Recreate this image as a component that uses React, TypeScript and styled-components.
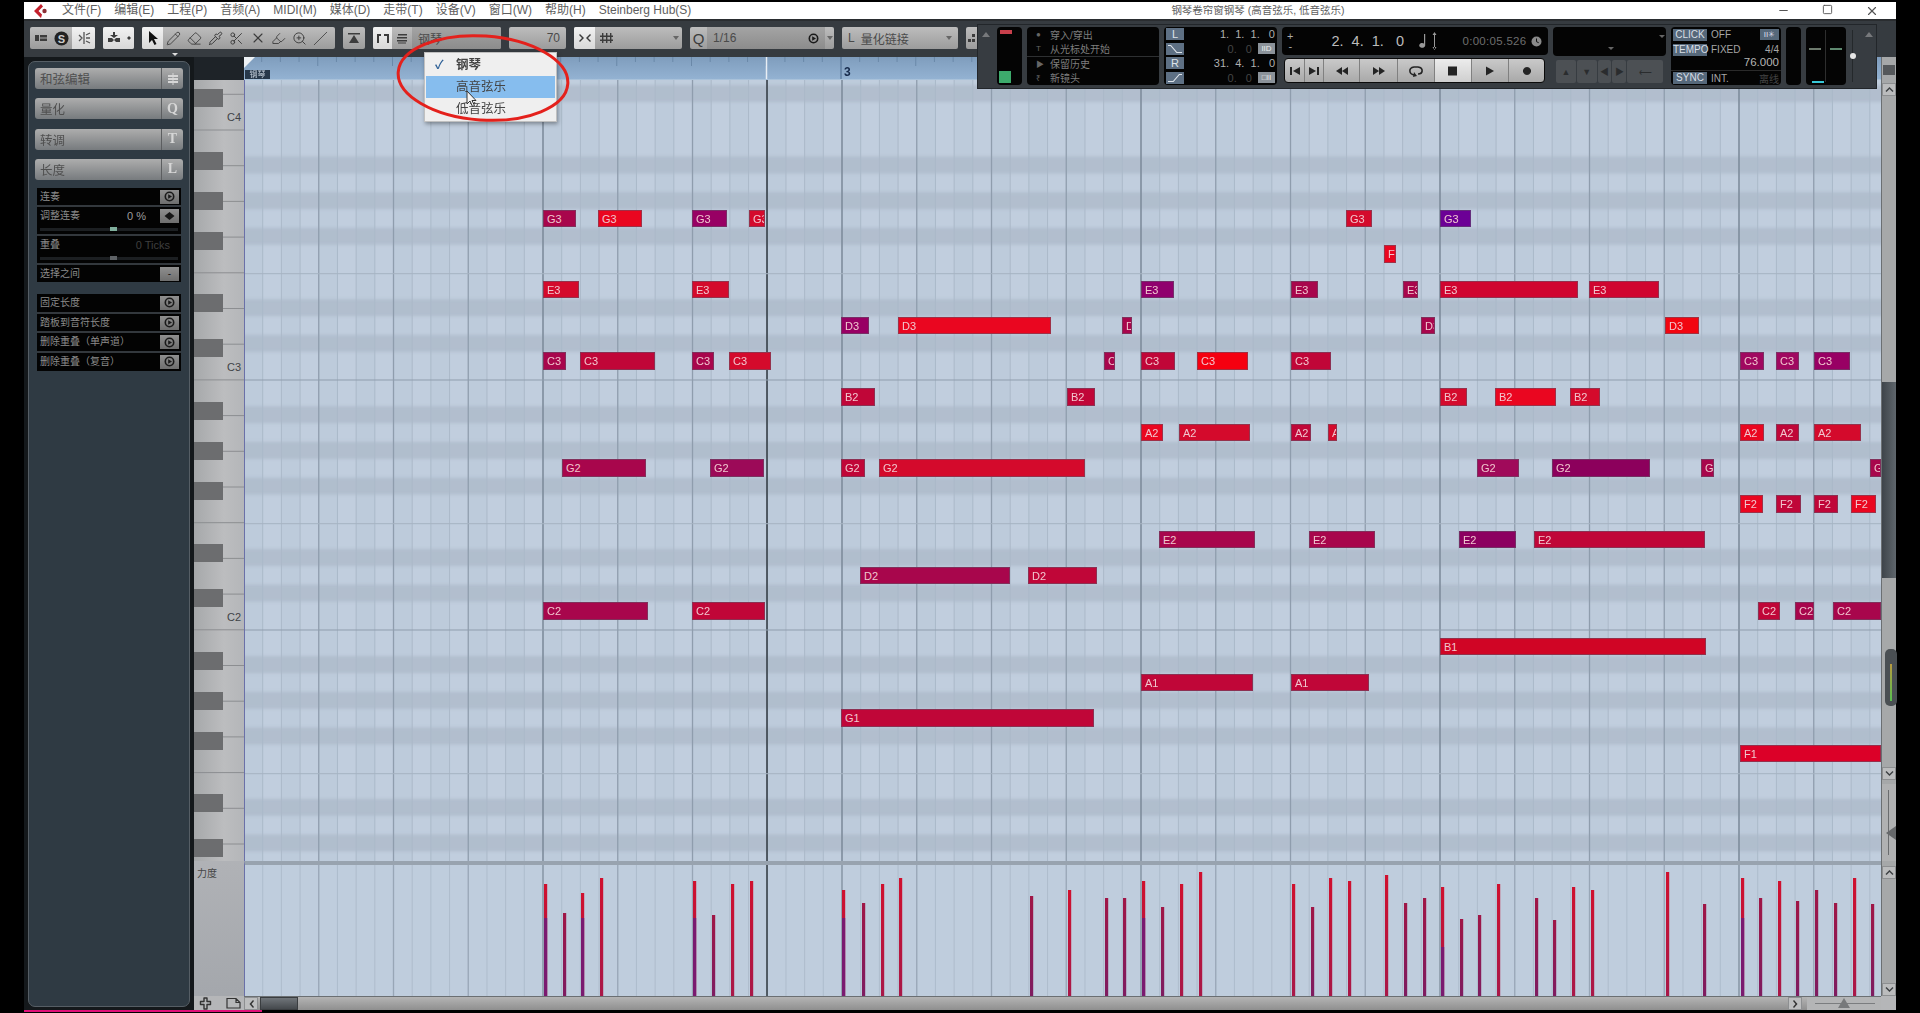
import styled, { createGlobalStyle } from "styled-components";
import { Eraser, Minus, Pencil, Pipette, Scissors, Slash, Square, X, ZoomIn, Highlighter } from "lucide-react";

const FONT = `"Liberation Sans", "Noto Sans CJK SC", sans-serif`;

const GlobalStyle = createGlobalStyle`
  html, body {
    margin: 0;
    padding: 0;
    background: #000;
    overflow: hidden;
  }
  * {
    box-sizing: border-box;
  }
`;

const Screen = styled.div`
  width: 1920px;
  height: 1013px;
  padding: 2px 24px 0;
  background: #000;
  font-family: ${FONT};
  overflow: hidden;
`;
const Blur = styled.div`
  position: relative;
  width: 1872px;
  filter: blur(0.6px);
`;

/* title bar */
const TitleBar = styled.div`
  display: flex;
  align-items: center;
  height: 17px;
  padding-left: 9px;
  background: #fff;
  color: #5e5e5e;
  font-size: 12px;
  line-height: 17px;
`;
const Menus = styled.div`
  display: flex;
  gap: 13px;
  margin-left: 13px;
`;
const WinTitle = styled.div`
  margin-left: 480px;
  font-size: 10.5px;
  width: 380px;
  white-space: nowrap;
`;
const WinButtons = styled.div`
  display: flex;
  gap: 32px;
  margin-left: auto;
  padding-right: 17px;
  color: #555;
`;

/* toolbar */
const Toolbar = styled.div`
  display: flex;
  gap: 8px;
  height: 38px;
  padding: 6px 0 0 6px;
  background: #363b40;
  border-top: 2px solid #2a2d30;
`;
const ToolGroup = styled.div<{ $w: number }>`
  display: flex;
  align-items: center;
  width: ${(p) => p.$w}px;
  height: 22px;
  flex: none;
  background: linear-gradient(#bdbdbd, #9c9c9c);
  border-radius: 2px;
  color: #4a4a4a;
  overflow: hidden;
  font-size: 12px;
`;
const ToolCell = styled.div<{ $w?: number; $on?: boolean; $big?: boolean }>`
  display: flex;
  align-items: center;
  justify-content: center;
  width: ${(p) => p.$w ?? 21}px;
  height: 100%;
  flex: none;
  background: ${(p) => (p.$on ? "linear-gradient(#f2f2f2, #d8d8d8)" : "transparent")};
  color: #3c3c3c;
  font-size: ${(p) => (p.$big ? 15 : 12)}px;
`;
const ToolField = styled.div<{ $dim?: boolean }>`
  display: flex;
  align-items: center;
  flex: 1;
  height: 100%;
  gap: 6px;
  padding: 0 6px;
  background: ${(p) => (p.$dim ? "linear-gradient(#a4a4a4, #8c8c8c)" : "transparent")};
  color: #4a4a4a;
  font-size: 12px;
  white-space: nowrap;
`;
const ToolSpacer = styled.span`
  flex: 1;
`;
const Caret = styled.span`
  width: 0;
  height: 0;
  border: 3px solid transparent;
  border-top: 4px solid #666;
  border-bottom: none;
`;
const ArrowMark = styled.div`
  position: absolute;
  left: 148px;
  top: 51px;
  width: 0;
  height: 0;
  border: 3px solid transparent;
  border-top: 3px solid #ddd;
`;

/* transport panel */
const Transport = styled.div`
  position: absolute;
  left: 953px;
  top: 22px;
  width: 900px;
  height: 65px;
  display: flex;
  gap: 5px;
  padding: 2px 0 3px 2px;
  background: #373c41;
  border: 1px solid #22262a;
  color: #9a9a9a;
  font-size: 10px;
`;
const PanelArrow = styled.div`
  width: 12px;
  flex: none;
  padding: 5px 0 0 2px;
  &::before {
    content: "";
    display: block;
    width: 0;
    height: 0;
    border: 4px solid transparent;
    border-bottom: 5px solid #77797c;
    border-top: none;
  }
`;
const BlackBox = styled.div<{ $w: number }>`
  position: relative;
  width: ${(p) => p.$w}px;
  flex: none;
  background: #040404;
  border-radius: 4px;
  overflow: hidden;
`;
const MeterRed = styled.div`
  margin: 3px 0 0 3px;
  width: 12px;
  height: 4px;
  background: #c8404c;
`;
const MeterGreen = styled.div`
  margin: 37px 0 0 2px;
  width: 12px;
  height: 12px;
  background: #3dab6c;
`;
const PunchRow = styled.div<{ $line?: boolean }>`
  display: flex;
  align-items: center;
  height: 14.5px;
  padding-left: 9px;
  gap: 9px;
  color: #7e7e7e;
  border-top: ${(p) => (p.$line ? "1px solid #2e3032" : "none")};
  white-space: nowrap;
`;
const PunchDot = styled.span`
  width: 5px;
  color: #666;
  font-size: 8px;
`;
const LocRow = styled.div`
  display: flex;
  align-items: center;
  justify-content: space-between;
  height: 14.5px;
  padding: 0 2px;
  color: #b0b0b0;
  font-size: 11px;
  white-space: pre;
`;
const LocBtn = styled.div`
  display: flex;
  align-items: center;
  justify-content: center;
  width: 18px;
  height: 12px;
  background: #5e7084;
  color: #dfe4ea;
  font-size: 11px;
`;
const LocDim = styled.div`
  display: flex;
  align-items: center;
  gap: 6px;
  color: #444;
`;
const LocTag = styled.div`
  display: flex;
  align-items: center;
  justify-content: center;
  width: 17px;
  height: 11px;
  background: #8b9299;
  color: #eee;
  font-size: 8px;
`;
const MainCol = styled.div`
  display: flex;
  flex-direction: column;
  gap: 3px;
  width: 266px;
  flex: none;
`;
const TimeRow = styled.div`
  display: flex;
  align-items: center;
  height: 28px;
  padding: 0 5px;
  background: #040404;
  border-radius: 4px;
  color: #bcbcbc;
  white-space: pre;
`;
const PlusCol = styled.div`
  display: flex;
  flex-direction: column;
  align-items: center;
  color: #aaa;
  font-size: 11px;
  line-height: 10px;
`;
const Position = styled.div`
  margin-left: 38px;
  width: 86px;
  font-size: 14.5px;
`;
const Clock = styled.div`
  display: flex;
  align-items: center;
  gap: 4px;
  margin-left: 23px;
  color: #6e6e6e;
  font-size: 11.5px;
  letter-spacing: 0.3px;
`;
const TransportBar = styled.div`
  display: flex;
  margin-left: 2px;
  width: 261px;
  height: 25px;
  border-radius: 4px;
  border: 1px solid #0b0b0b;
  overflow: hidden;
  background: linear-gradient(#c9c9c9, #a9a9a9);
`;
const TransportBtn = styled.div<{ $w: number; $on?: boolean }>`
  display: flex;
  align-items: center;
  justify-content: center;
  width: ${(p) => p.$w}px;
  flex: none;
  border-right: 1px solid #808080;
  background: ${(p) => (p.$on ? "linear-gradient(#ececec, #cfcfcf)" : "transparent")};
  color: #242424;
`;
const MarkerCol = styled.div`
  display: flex;
  flex-direction: column;
  gap: 4px;
  width: 113px;
  flex: none;
`;
const MarkerTop = styled.div`
  position: relative;
  height: 29px;
  background: #040404;
  border-radius: 4px;
`;
const TinyCaret = styled.span<{ $x: number; $y: number }>`
  position: absolute;
  left: ${(p) => p.$x}px;
  top: ${(p) => p.$y}px;
  border: 3px solid transparent;
  border-top: 3px solid #666;
`;
const MarkerBtns = styled.div`
  display: flex;
  gap: 1px;
  margin: 0 3px;
  height: 23px;
`;
const MarkerBtn = styled.div<{ $w: number }>`
  display: flex;
  align-items: center;
  justify-content: center;
  width: ${(p) => p.$w}px;
  background: #4c5054;
  border-radius: 2px;
  color: #2a2c2e;
  font-size: 9px;
`;
const ClickRow = styled.div<{ $line?: boolean }>`
  display: flex;
  align-items: center;
  height: 15px;
  gap: 4px;
  padding: 0 2px;
  color: #a6a6a6;
  border-top: ${(p) => (p.$line ? "1px solid #2a2a2a" : "none")};
  white-space: nowrap;
`;
const ClickTag = styled.div`
  width: 34px;
  height: 12px;
  line-height: 12px;
  text-align: center;
  background: #56687a;
  color: #d8dfe6;
  font-size: 10px;
`;
const ClickRight = styled.div<{ $size?: number; $dim?: boolean }>`
  margin-left: auto;
  font-size: ${(p) => p.$size ?? 10}px;
  color: ${(p) => (p.$dim ? "#444" : "#a6a6a6")};
`;
const ClickIcon = styled.div`
  margin-left: auto;
  width: 19px;
  height: 11px;
  line-height: 11px;
  text-align: center;
  background: #56687a;
  color: #dde;
  font-size: 8px;
`;
const ClickValue = styled.div`
  height: 10px;
  padding-right: 2px;
  line-height: 10px;
  text-align: right;
  color: #b4b4b4;
  font-size: 11.5px;
`;
const OutLevel = styled.div<{ $x: number; $y: number; $w: number; $color: string }>`
  position: absolute;
  left: ${(p) => p.$x}px;
  top: ${(p) => p.$y}px;
  width: ${(p) => p.$w}px;
  height: 2px;
  background: ${(p) => p.$color};
`;
const OutMid = styled.div`
  position: absolute;
  left: 19px;
  top: 3px;
  bottom: 3px;
  width: 1px;
  background: #2e2e2e;
`;
const Fader = styled.div`
  position: relative;
  width: 10px;
  flex: none;
  margin-left: -3px;
  &::before {
    content: "";
    position: absolute;
    left: 4px;
    top: 3px;
    bottom: 3px;
    width: 1px;
    background: #24282b;
  }
  &::after {
    content: "";
    position: absolute;
    left: 2px;
    top: 26px;
    width: 6px;
    height: 6px;
    border-radius: 50%;
    background: #e6e6e6;
  }
`;

/* body */
const Body = styled.div`
  display: flex;
  height: 953px;
`;
const Inspector = styled.div`
  width: 170px;
  flex: none;
  padding: 4px 4px 3px;
  background: #14181b;
`;
const InspectorPanel = styled.div`
  height: 100%;
  padding: 6px 6px;
  background: #2f3a43;
  border: 1px solid #565e65;
  border-radius: 7px;
`;
const SectionList = styled.div`
  display: flex;
  flex-direction: column;
  gap: 9.3px;
`;
const Section = styled.div`
  display: flex;
  align-items: center;
  height: 21px;
  border-radius: 3px;
  background: linear-gradient(#adadad, #777b7e);
  color: #4f4f4f;
  font-size: 12.5px;
`;
const SectionName = styled.div`
  flex: 1;
  padding-left: 5px;
`;
const SectionKey = styled.div`
  display: flex;
  align-items: center;
  justify-content: center;
  width: 22px;
  height: 100%;
  border-left: 1px solid #5c5e60;
  color: #d6d6d6;
  font: bold 14px "Liberation Serif", serif;
`;
const ToolBox = styled.div<{ $top: number }>`
  display: flex;
  flex-direction: column;
  gap: 2px;
  margin: ${(p) => p.$top}px 2px 0;
  background: #33383d;
`;
const ToolRow = styled.div<{ $h: number }>`
  position: relative;
  display: flex;
  align-items: flex-start;
  height: ${(p) => p.$h}px;
  padding: 2px 2px 0 3px;
  background: #030303;
  color: #8b8b8b;
  font-size: 10px;
  line-height: 14px;
`;
const RowValue = styled.div<{ $dim?: boolean }>`
  margin-left: auto;
  margin-right: ${(p) => (p.$dim ? 9 : 14)}px;
  color: ${(p) => (p.$dim ? "#3f3f3f" : "#9e9e9e")};
  font-size: 11px;
`;
const ExecBtn = styled.div`
  display: flex;
  align-items: center;
  justify-content: center;
  margin-left: auto;
  width: 19px;
  height: 14px;
  flex: none;
  background: linear-gradient(#8f8f8f, #6e6e6e);
  color: #161616;
  ${RowValue} + & {
    margin-left: 0;
  }
`;
const RowSlider = styled.div`
  position: absolute;
  left: 3px;
  right: 3px;
  bottom: 3px;
  height: 3px;
  background: #1c1f22;
`;
const SliderKnob = styled.div<{ $green?: boolean }>`
  position: absolute;
  left: 70px;
  top: -1px;
  width: 7px;
  height: 4px;
  background: ${(p) => (p.$green ? "#7fae9c" : "#5e6266")};
`;

/* editor grid */
const Editor = styled.div`
  display: grid;
  flex: 1;
  grid-template-columns: 50px 1637px 15px;
  grid-template-rows: 23px 781px 135px 14px;
`;
const Corner = styled.div`
  background: #1e2328;
`;
const Ruler = styled.div`
  position: relative;
  background: linear-gradient(#7f9dbd, #93b2d2);
  border-bottom: 1px solid #a9c2da;
`;
const RulerSvg = styled.svg`
  display: block;
`;
const BarNumber = styled.div`
  position: absolute;
  left: 600px;
  top: 8px;
  color: #15294a;
  font-size: 12px;
  font-weight: bold;
`;
const TrackTag = styled.div`
  position: absolute;
  left: 1px;
  bottom: 0;
  width: 25px;
  height: 9px;
  background: #27384a;
  color: #c9d3de;
  font-size: 8px;
  line-height: 9px;
  text-align: center;
`;
const CornerFlag = styled.div`
  position: absolute;
  left: 0;
  top: 0;
  width: 0;
  height: 0;
  border-top: 11px solid #eef2f6;
  border-right: 11px solid transparent;
`;
const RollPane = styled.div`
  position: relative;
  overflow: hidden;
  border-left: 1px solid #6a70a8;
`;
const GridSvg = styled.svg`
  position: absolute;
  left: -1px;
  top: 0;
`;
const SoftBands = styled.g`
  filter: blur(1.5px);
`;
const Note = styled.div<{ $color: string }>`
  position: absolute;
  height: 17.5px;
  padding-left: 3px;
  overflow: hidden;
  background: ${(p) => p.$color};
  border: 1px solid rgba(96, 84, 104, 0.55);
  color: #f1c6ce;
  font-size: 11px;
  line-height: 16px;
  white-space: nowrap;
`;
const KeysSvg = styled.svg`
  display: block;
`;
const VelLabelCell = styled.div`
  padding: 4px 3px;
  background: linear-gradient(#b0b2b6, #a4a7ac);
  color: #454545;
  font-size: 10px;
`;
const VelPane = styled.div`
  position: relative;
  border-top: 4px solid #98a3af;
  border-left: 1px solid #6a70a8;
  overflow: hidden;
`;
const VScroll = styled.div`
  position: relative;
  display: flex;
  flex-direction: column;
  background: #a6a8a9;
  border-left: 1px solid #6b6f72;
`;
const DropBtn = styled.div`
  height: 10px;
  margin: 8px 1px 0;
  flex: none;
  background: #55585b;
`;
const ScrollBtn = styled.div<{ $gap?: number }>`
  display: flex;
  align-items: center;
  justify-content: center;
  height: 13px;
  margin-top: ${(p) => p.$gap ?? 0}px;
  flex: none;
  background: #bbbcbd;
  border: 1px solid #8d8f91;
  color: #3c3f42;
`;
const ScrollTrack = styled.div`
  flex: 1;
  padding-top: 286px;
`;
const ScrollThumb = styled.div`
  height: 196px;
  background: linear-gradient(90deg, #3e444a, #5f666c);
`;
const MiniKnob = styled.div`
  position: absolute;
  left: 3px;
  top: 569px;
  width: 12px;
  height: 57px;
  border-radius: 5px;
  background: #4a4f53;
  &::after {
    content: "";
    position: absolute;
    left: 5px;
    top: 15px;
    bottom: 5px;
    width: 2px;
    background: linear-gradient(#b89a40, #58c050);
  }
`;
const ZoomRail = styled.div`
  position: relative;
  height: 77px;
  flex: none;
  margin-top: 4px;
  background: #b0b1b2;
  &::before {
    content: "";
    position: absolute;
    left: 6px;
    top: 6px;
    bottom: 6px;
    width: 1px;
    background: #6a6c6e;
  }
`;
const ZoomHandle = styled.div`
  position: absolute;
  right: 0;
  top: 42px;
  width: 0;
  height: 0;
  border: 7px solid transparent;
  border-right: 10px solid #66686a;
  border-left: none;
`;
const VelTrack = styled.div`
  flex: 1;
`;
const BottomIcons = styled.div`
  display: flex;
  align-items: center;
  justify-content: space-between;
  padding: 0 3px 0 5px;
  background: #b5b6b8;
  color: #333;
`;
const HScroll = styled.div`
  display: flex;
  align-items: stretch;
  background: linear-gradient(#b4b4b4, #8f8f8f);
  border-top: 1px solid #6b6f72;
`;
const HBtn = styled.div`
  display: flex;
  align-items: center;
  justify-content: center;
  width: 14px;
  flex: none;
  background: #bdbebf;
  border: 1px solid #8d8f91;
  color: #333;
`;
const HThumb = styled.div`
  width: 38px;
  flex: none;
  margin-left: 2px;
  background: linear-gradient(#70757a, #45494d);
  border: 1px solid #3a3d40;
`;
const HFill = styled.div`
  flex: 1;
`;
const HZoom = styled.div`
  position: relative;
  width: 74px;
  flex: none;
  margin-left: 5px;
  background: #b4b5b6;
  &::before {
    content: "";
    position: absolute;
    left: 8px;
    right: 6px;
    top: 6px;
    height: 1px;
    background: #7b7d7f;
  }
  &::after {
    content: "";
    position: absolute;
    left: 31px;
    top: 1px;
    border: 6px solid transparent;
    border-bottom: 10px solid #77797b;
    border-top: none;
  }
`;
const PinkLine = styled.div`
  width: 238px;
  height: 2px;
  background: #e01078;
`;

/* dropdown over the toolbar */
const Menu = styled.div`
  position: absolute;
  left: 400px;
  top: 50px;
  width: 133px;
  padding: 1px;
  background: #efefef;
  border: 1px solid #c0c0c0;
  box-shadow: 1px 2px 4px rgba(0, 0, 0, 0.35);
  color: #444;
  font-size: 12.5px;
`;
const MenuItem = styled.div<{ $active?: boolean; $bold?: boolean }>`
  position: relative;
  height: 22px;
  padding-left: 30px;
  line-height: 22px;
  background: ${(p) => (p.$active ? "#86bdee" : "transparent")};
  font-weight: ${(p) => (p.$bold ? "bold" : "normal")};
`;
const MenuCheck = styled.span`
  position: absolute;
  left: 9px;
  top: 0;
  color: #2c5f96;
  font-size: 12px;
`;
const Annotation = styled.svg`
  position: absolute;
  left: 346px;
  top: 30px;
  pointer-events: none;
`;
const Pointer = styled.svg`
  position: absolute;
  left: 442px;
  top: 88px;
  pointer-events: none;
`;

const ROW_TOP = 209.6;
const ROW_STEP = 35.69;
const PITCHES = ["G3", "F3", "E3", "D3", "C3", "B2", "A2", "G2", "F2", "E2", "D2", "C2", "B1", "A1", "G1", "F1"];

const P = "#980064";
const V = "#a8064c";
const W = "#c00638";
const R = "#d40a2c";
const B = "#ea0620";

// pitch, left, right in screen pixels, colour
const NOTES: [string, number, number, string][] = [
  ["G3", 543, 576, V], ["G3", 598, 642, B], ["G3", 692, 727, P], ["G3", 749, 765, R],
  ["G3", 1346, 1372, R], ["G3", 1440, 1471, "#6c0096"],
  ["F3", 1384, 1396, B],
  ["E3", 543, 579, R], ["E3", 692, 729, R], ["E3", 1141, 1174, "#90006e"], ["E3", 1291, 1318, V],
  ["E3", 1403, 1418, V], ["E3", 1440, 1578, "#d00530"], ["E3", 1589, 1659, "#d00530"],
  ["D3", 841, 869, P], ["D3", 898, 1051, B], ["D3", 1122, 1132, V], ["D3", 1421, 1435, V], ["D3", 1665, 1699, "#f20510"],
  ["C3", 543, 566, V], ["C3", 580, 655, W], ["C3", 692, 714, V], ["C3", 729, 771, R],
  ["C3", 1104, 1115, V], ["C3", 1141, 1175, W], ["C3", 1197, 1248, "#f50010"], ["C3", 1291, 1331, W],
  ["C3", 1740, 1764, "#a00860"], ["C3", 1776, 1799, "#a00860"], ["C3", 1814, 1850, P],
  ["B2", 841, 875, W], ["B2", 1067, 1095, W], ["B2", 1440, 1467, R], ["B2", 1495, 1556, B], ["B2", 1570, 1600, R],
  ["A2", 1141, 1163, B], ["A2", 1179, 1250, R], ["A2", 1291, 1311, W], ["A2", 1328, 1337, R],
  ["A2", 1740, 1764, B], ["A2", 1776, 1799, W], ["A2", 1814, 1861, R],
  ["G2", 562, 646, V], ["G2", 710, 764, "#9c0a58"], ["G2", 841, 865, W], ["G2", 879, 1085, R],
  ["G2", 1477, 1519, "#a00a5a"], ["G2", 1552, 1650, "#8c005c"], ["G2", 1701, 1714, V], ["G2", 1870, 1881, V],
  ["F2", 1740, 1763, B], ["F2", 1776, 1801, W], ["F2", 1814, 1838, W], ["F2", 1851, 1876, B],
  ["E2", 1159, 1255, V], ["E2", 1309, 1375, V], ["E2", 1459, 1516, "#8c0060"], ["E2", 1534, 1705, W],
  ["D2", 860, 1010, V], ["D2", 1028, 1097, W],
  ["C2", 543, 648, V], ["C2", 692, 765, W], ["C2", 1758, 1780, W], ["C2", 1795, 1814, V], ["C2", 1833, 1881, V],
  ["B1", 1440, 1706, "#d00525"],
  ["A1", 1141, 1253, W], ["A1", 1291, 1369, W],
  ["G1", 841, 1094, W],
  ["F1", 1740, 1881, "#dc0028"],
];

// velocity stems: x in screen pixels, top in screen pixels, kind
const STEMS: [number, number, string][] = [
  [544, 884, "s"], [563, 913, "w"], [581, 893, "s"], [600, 878, "r"], [693, 881, "s"], [712, 915, "w"],
  [731, 884, "r"], [750, 881, "r"], [842, 890, "s"], [862, 903, "w"], [881, 884, "r"], [899, 878, "r"],
  [1030, 896, "w"], [1068, 890, "r"], [1105, 898, "w"], [1123, 898, "w"], [1142, 881, "s"], [1161, 907, "w"],
  [1180, 884, "r"], [1199, 872, "r"], [1292, 884, "r"], [1311, 907, "w"], [1329, 878, "r"], [1348, 881, "r"],
  [1385, 875, "r"], [1404, 903, "w"], [1423, 898, "w"], [1441, 887, "s2"], [1460, 919, "w"], [1478, 915, "w"],
  [1497, 884, "r"], [1535, 898, "w"], [1553, 920, "w"], [1572, 887, "r"], [1591, 890, "r"], [1666, 872, "r"],
  [1703, 904, "w"], [1741, 878, "s"], [1759, 898, "w"], [1778, 881, "r"], [1796, 901, "w"], [1815, 890, "w"],
  [1834, 903, "w"], [1853, 878, "r"], [1871, 904, "w"],
];

const BLACK_KEYS = [89, 152, 192, 232, 294];
const BAND_ROWS = [-3, -1, 0, 1, 3, 4, 6, 7, 8, 10, 11, 13, 14, 15, 17, 18];
const SIXTEENTH = 299 / 16;
const COLUMNS = Array.from({ length: 88 }, (_, i) => i);

function lineStyle(i: number) {
  if (i % 16 === 0) return { stroke: "#7e8c9c", width: 1.6 };
  if (i % 4 === 0) return { stroke: "#8f9dad", width: 1.3 };
  return { stroke: "#abb9c9", width: 1 };
}

function GridLines({ height, fade = 1 }: { height: number; fade?: number }) {
  return (
    <>
      <g opacity={fade}>
        {COLUMNS.map((i) => {
          const l = lineStyle(i);
          const x = i * SIXTEENTH;
          return <line key={i} x1={x} x2={x} y1={0} y2={height} stroke={l.stroke} strokeWidth={l.width} />;
        })}
      </g>
      <line x1={523} x2={523} y1={0} y2={height} stroke="#3b444c" strokeWidth={1.6} />
    </>
  );
}

function RollGrid() {
  const hLines = [273.7, 380, 523.7, 630, 773.7];
  return (
    <GridSvg width={1638} height={781}>
      <rect width={1638} height={781} fill="#bdcbdb" />
      {COLUMNS.filter((i) => i % 2 === 1).map((i) => (
        <rect key={i} x={i * SIXTEENTH} y={0} width={SIXTEENTH} height={781} fill="#c4d1e0" opacity={0.55} />
      ))}
      <SoftBands>
        {BAND_ROWS.map((r) => (
          <rect key={r} x={-4} y={ROW_TOP + r * ROW_STEP - 17.5 - 80} width={1646} height={17} fill="#abb8c7" opacity={0.7} />
        ))}
      </SoftBands>
      <GridLines height={781} />
      {hLines.map((y) => (
        <line key={y} x1={0} x2={1638} y1={y - 80} y2={y - 80} stroke={y === 380 || y === 630 ? "#8f9dad" : "#a6b3c2"} />
      ))}
    </GridSvg>
  );
}

function VelocityGrid() {
  return (
    <GridSvg width={1638} height={131}>
      <defs>
        <linearGradient id="stemRed" x1="0" x2="0" y1="0" y2="1">
          <stop offset="0" stopColor="#d0102e" />
          <stop offset="1" stopColor="#a81848" />
        </linearGradient>
        <linearGradient id="stemWine" x1="0" x2="0" y1="0" y2="1">
          <stop offset="0" stopColor="#a01646" />
          <stop offset="1" stopColor="#7e1c60" />
        </linearGradient>
      </defs>
      <rect width={1638} height={131} fill="#bfcddd" />
      <GridLines height={131} fade={0.8} />
      {STEMS.map(([x, top, kind]) => {
        const y = top - 865;
        const h = 131 - y;
        const split = kind === "s" ? 53 : kind === "s2" ? 82 : 0;
        return (
          <g key={x}>
            <rect x={x - 244} y={y} width={3.2} height={h} fill={kind === "w" ? "url(#stemWine)" : "url(#stemRed)"} />
            {split > 0 && <rect x={x - 244} y={split} width={3.2} height={131 - split} fill="#7a1a70" />}
          </g>
        );
      })}
    </GridSvg>
  );
}

function PianoKeys() {
  const lines = Array.from({ length: 22 }, (_, i) => 94.3 + i * 35.7 - 80);
  const keys = [0, 250, 500, 750].flatMap((o) => BLACK_KEYS.map((y) => y + o - 80)).filter((y) => y < 770);
  return (
    <KeysSvg width={50} height={781}>
      <defs>
        <linearGradient id="keyFill" x1="0" x2="1" y1="0" y2="0">
          <stop offset="0" stopColor="#a6a8aa" />
          <stop offset="0.6" stopColor="#bcbdbf" />
          <stop offset="1" stopColor="#b4b6b9" />
        </linearGradient>
      </defs>
      <rect width={50} height={781} fill="url(#keyFill)" />
      {lines.map((y) => (
        <line key={y} x1={0} x2={50} y1={y} y2={y} stroke="#8c8e91" />
      ))}
      {keys.map((y) => (
        <rect key={y} x={0} y={y} width={29} height={18} fill="#6c6d6f" />
      ))}
      {[
        ["C4", 41],
        ["C3", 291],
        ["C2", 541],
      ].map(([t, y]) => (
        <text key={t} x={47} y={y} textAnchor="end" fontFamily="Liberation Sans" fontSize={11} fill="#3f4347">
          {t}
        </text>
      ))}
    </KeysSvg>
  );
}

function RulerTicks() {
  return (
    <RulerSvg width={1637} height={22}>
      {COLUMNS.map((i) => {
        const x = i * SIXTEENTH - 1;
        const h = i % 16 === 0 ? 22 : i % 4 === 0 ? 9 : 5;
        return <line key={i} x1={x} x2={x} y1={0} y2={h} stroke={i % 16 === 0 ? "#4a6a8e" : "#6a88a8"} />;
      })}
      <line x1={522.5} x2={522.5} y1={0} y2={22} stroke="#e8eef4" strokeWidth={1.5} />
    </RulerSvg>
  );
}

function CubaseLogo() {
  return (
    <svg width={16} height={14} viewBox="0 0 16 14">
      <path d="M8 0 L1 7 L8 14 L9 10.5 L5.5 7 L10 2.5 Z" fill="#c3202c" />
      <circle cx={11.5} cy={7} r={2.2} fill="#8c3036" />
    </svg>
  );
}

function Shape({ d, w = 14 }: { d: string; w?: number }) {
  return (
    <svg width={w} height={12} viewBox={`0 0 ${w} 12`} fill="currentColor">
      <path d={d} />
    </svg>
  );
}

function PlayCircle() {
  return (
    <svg width={11} height={11} viewBox="0 0 11 11">
      <circle cx={5.5} cy={5.5} r={4.2} fill="none" stroke="#1a1a1a" strokeWidth={1.6} />
      <path d="M4.2 3.2 L8 5.5 L4.2 7.8 Z" fill="#1a1a1a" />
    </svg>
  );
}

const MENU_ITEMS = ["文件(F)", "编辑(E)", "工程(P)", "音频(A)", "MIDI(M)", "媒体(D)", "走带(T)", "设备(V)", "窗口(W)", "帮助(H)", "Steinberg Hub(S)"];

function App() {
  return (
    <Screen>
      <GlobalStyle />
      <Blur>
        <TitleBar>
          <CubaseLogo />
          <Menus>
            {MENU_ITEMS.map((m) => (
              <span key={m}>{m}</span>
            ))}
          </Menus>
          <WinTitle>钢琴卷帘窗钢琴 (高音弦乐, 低音弦乐)</WinTitle>
          <WinButtons>
            <Minus size={13} />
            <Square size={11} />
            <X size={14} />
          </WinButtons>
        </TitleBar>

        <Toolbar>
          <ToolGroup $w={65}>
            <ToolCell>
              <Shape d="M1 3h4v6H1z M6 3h7v2.5H6z M6 6.5h7V9H6z" />
            </ToolCell>
            <ToolCell>
              <svg width={15} height={15} viewBox="0 0 15 15">
                <circle cx={7.5} cy={7.5} r={7} fill="#222" />
                <text x={7.5} y={11.5} textAnchor="middle" fontFamily="Liberation Sans" fontWeight="bold" fontSize={11} fill="#ccc">
                  S
                </text>
              </svg>
            </ToolCell>
            <ToolCell $w={23} $on>
              <svg width={14} height={14} viewBox="0 0 14 14" fill="none" stroke="#555" strokeWidth={1.3}>
                <path d="M7 1v12M2 4l3 3-3 3M9 4l4-2M9 7h4M9 10l4 2" />
              </svg>
            </ToolCell>
          </ToolGroup>
          <ToolGroup $w={31}>
            <ToolCell $w={21} $on>
              <Shape d="M6 0h2v3h3L7 6 3 3h3zM1 6l4 0 2 2-2 2-4 0zM13 6l-4 0-2 2 2 2 4 0z" />
            </ToolCell>
            <ToolCell $w={10} $on>
              <Shape w={6} d="M3 4l2 2-2 2-2-2z" />
            </ToolCell>
          </ToolGroup>
          <ToolGroup $w={193}>
            <ToolCell $w={21} $on>
              <svg width={12} height={16} viewBox="0 0 12 16">
                <path d="M2 1 L2 13 L5 10 L7.5 15 L9.5 14 L7 9 L11 9 Z" fill="#111" />
              </svg>
            </ToolCell>
            <ToolCell><Pencil size={15} strokeWidth={1.4} /></ToolCell>
            <ToolCell><Eraser size={15} strokeWidth={1.4} /></ToolCell>
            <ToolCell><Pipette size={15} strokeWidth={1.6} /></ToolCell>
            <ToolCell><Scissors size={15} strokeWidth={1.5} /></ToolCell>
            <ToolCell><X size={16} strokeWidth={1.7} /></ToolCell>
            <ToolCell><Highlighter size={15} strokeWidth={1.4} /></ToolCell>
            <ToolCell><ZoomIn size={15} strokeWidth={1.5} /></ToolCell>
            <ToolCell><Slash size={15} strokeWidth={1.3} /></ToolCell>
          </ToolGroup>
          <ToolGroup $w={22}>
            <ToolCell $w={22}>
              <Shape d="M1 1h12v1.4H1zM7 3l5 8H2z" />
            </ToolCell>
          </ToolGroup>
          <ToolGroup $w={128}>
            <ToolCell $w={19} $on>
              <Shape d="M1 2h4v2H3v7H1zM8 2h5v9h-2V4H8z" />
            </ToolCell>
            <ToolCell $w={20}>
              <Shape d="M3 2h9v1.6H3zM2 5h10v1.6H2zM2 8h10v1.6H2zM3 10.4h8v1H3z" />
            </ToolCell>
            <ToolField $dim>钢琴</ToolField>
          </ToolGroup>
          <ToolGroup $w={57}>
            <ToolField>
              <ToolSpacer />
              70
            </ToolField>
          </ToolGroup>
          <ToolGroup $w={108}>
            <ToolCell $w={21} $on>
              <Shape d="M2 2l4 4-4 4-1-1 3-3-3-3zM12 2l-4 4 4 4 1-1-3-3 3-3z" />
            </ToolCell>
            <ToolCell $w={21}>
              <Shape d="M3 1h1.4v10H3zM7 1h1.4v10H7zM11 1h1.4v10H11zM1 3.5h13v1.4H1zM1 7.5h13v1.4H1z" />
            </ToolCell>
            <ToolSpacer />
            <ToolCell $w={12}><Caret /></ToolCell>
          </ToolGroup>
          <ToolGroup $w={144}>
            <ToolCell $w={17} $big>Q</ToolCell>
            <ToolField $dim>
              1/16
              <ToolSpacer />
              <PlayCircle />
            </ToolField>
            <ToolCell $w={9}><Caret /></ToolCell>
          </ToolGroup>
          <ToolGroup $w={116}>
            <ToolField>
              <span>L</span>
              量化链接
              <ToolSpacer />
              <Caret />
            </ToolField>
          </ToolGroup>
          <ToolGroup $w={30}>
            <ToolCell $w={12}>
              <Shape w={10} d="M5 2h3v3H5zM1 7h3v3H1zM5 7h3v3H5z" />
            </ToolCell>
          </ToolGroup>
        </Toolbar>
        <ArrowMark />

        <Body>
          <Inspector>
            <InspectorPanel>
              <SectionList>
                <Section>
                  <SectionName>和弦编辑</SectionName>
                  <SectionKey>
                    <Shape w={12} d="M1 2h10v2H1zM1 5h10v2H1zM1 8h10v2H1zM5.500 0h1v12h-1z" />
                  </SectionKey>
                </Section>
                <Section><SectionName>量化</SectionName><SectionKey>Q</SectionKey></Section>
                <Section><SectionName>转调</SectionName><SectionKey>T</SectionKey></Section>
                <Section><SectionName>长度</SectionName><SectionKey>L</SectionKey></Section>
              </SectionList>
              <ToolBox $top={8}>
                <ToolRow $h={17}>连奏<ExecBtn><PlayCircle /></ExecBtn></ToolRow>
                <ToolRow $h={27}>
                  调整连奏
                  <RowValue>0 %</RowValue>
                  <ExecBtn><Shape w={13} d="M6.5 2l5 4-5 4-5-4z" /></ExecBtn>
                  <RowSlider><SliderKnob $green /></RowSlider>
                </ToolRow>
                <ToolRow $h={27}>
                  重叠
                  <RowValue $dim>0 Ticks</RowValue>
                  <RowSlider><SliderKnob /></RowSlider>
                </ToolRow>
                <ToolRow $h={17}>选择之间<ExecBtn>-</ExecBtn></ToolRow>
              </ToolBox>
              <ToolBox $top={12}>
                <ToolRow $h={17.7}>固定长度<ExecBtn><PlayCircle /></ExecBtn></ToolRow>
                <ToolRow $h={17.7}>踏板到音符长度<ExecBtn><PlayCircle /></ExecBtn></ToolRow>
                <ToolRow $h={17.7}>删除重叠（单声道）<ExecBtn><PlayCircle /></ExecBtn></ToolRow>
                <ToolRow $h={17.7}>删除重叠（复音）<ExecBtn><PlayCircle /></ExecBtn></ToolRow>
              </ToolBox>
            </InspectorPanel>
          </Inspector>

          <Editor>
            <Corner />
            <Ruler>
              <RulerTicks />
              <CornerFlag />
              <TrackTag>钢琴</TrackTag>
              <BarNumber>3</BarNumber>
            </Ruler>
            <VScroll>
              <DropBtn />
            </VScroll>

            <PianoKeys />
            <RollPane>
              <RollGrid />
              {NOTES.map(([pitch, left, right, color], i) => (
                <Note
                  key={i}
                  $color={color}
                  style={{
                    left: left - 245,
                    width: right - left,
                    top: ROW_TOP + PITCHES.indexOf(pitch) * ROW_STEP - 80,
                  }}
                >
                  {pitch}
                </Note>
              ))}
            </RollPane>
            <VScroll>
              <ScrollBtn $gap={3}><Shape w={9} d="M4.5 3l4 4-1 1-3-3-3 3-1-1z" /></ScrollBtn>
              <ScrollTrack><ScrollThumb /></ScrollTrack>
              <MiniKnob />
              <ScrollBtn><Shape w={9} d="M4.5 8l4-4-1-1-3 3-3-3-1 1z" /></ScrollBtn>
              <ZoomRail><ZoomHandle /></ZoomRail>
            </VScroll>

            <VelLabelCell>力度</VelLabelCell>
            <VelPane>
              <VelocityGrid />
            </VelPane>
            <VScroll>
              <ScrollBtn $gap={5}><Shape w={9} d="M4.5 3l4 4-1 1-3-3-3 3-1-1z" /></ScrollBtn>
              <VelTrack />
              <ScrollBtn><Shape w={9} d="M4.5 8l4-4-1-1-3 3-3-3-1 1z" /></ScrollBtn>
            </VScroll>

            <BottomIcons>
              <svg width={13} height={13} viewBox="0 0 13 13" fill="none" stroke="currentColor" strokeWidth={1.4}>
                <path d="M5 1h3v3.500h3.500v3H8V12H5V7.500H1.500v-3H5z" strokeLinejoin="round" />
              </svg>
              <svg width={15} height={12} viewBox="0 0 15 12" fill="none" stroke="currentColor" strokeWidth={1.2}>
                <path d="M1 1.500h9l4 4V11H1zM10 1.500v4h4" />
              </svg>
            </BottomIcons>
            <HScroll>
              <HBtn><Shape w={7} d="M5 2L1.5 6 5 10l1-1-2.500-3L6 3z" /></HBtn>
              <HThumb />
              <HFill />
              <HBtn><Shape w={7} d="M2 2l3.500 4L2 10 1 9l2.500-3L1 3z" /></HBtn>
              <HZoom />
            </HScroll>
            <BottomIcons />
          </Editor>
        </Body>
        <PinkLine />

        <Transport>
          <PanelArrow />
          <BlackBox $w={25}>
            <MeterRed />
            <MeterGreen />
          </BlackBox>
          <BlackBox $w={132}>
            <PunchRow><PunchDot>●</PunchDot>穿入/穿出</PunchRow>
            <PunchRow><PunchDot>T</PunchDot>从光标处开始</PunchRow>
            <PunchRow $line><PunchDot>▶</PunchDot>保留历史</PunchRow>
            <PunchRow><PunchDot>₹</PunchDot>新镜头</PunchRow>
          </BlackBox>
          <BlackBox $w={113}>
            <LocRow><LocBtn>L</LocBtn>1.  1.  1.   0</LocRow>
            <LocRow>
              <LocBtn><Shape w={16} d="M1 2h3l6 7h5v1H9.500l-6-7H1z" /></LocBtn>
              <LocDim>0.   0<LocTag>IID</LocTag></LocDim>
            </LocRow>
            <LocRow><LocBtn>R</LocBtn>31.  4.  1.   0</LocRow>
            <LocRow>
              <LocBtn><Shape w={16} d="M1 9h5l6-7h3v1h-2.500l-6 7H1z" /></LocBtn>
              <LocDim>0.   0<LocTag>□II</LocTag></LocDim>
            </LocRow>
          </BlackBox>
          <MainCol>
            <TimeRow>
              <PlusCol><span>+</span><span>-</span></PlusCol>
              <Position>2.  4.  1.   0</Position>
              <svg width={22} height={18} viewBox="0 0 22 18" fill="#999">
                <path d="M7 2h1.200v11.500a3 2.400 0 1 1-1.200-2z" />
                <path d="M17 1h1v16h-1zM17.500 0l2 3h-4zM17.500 18l2-3h-4z" />
              </svg>
              <Clock>
                0:00:05.526
                <svg width={11} height={11} viewBox="0 0 11 11">
                  <circle cx={5.5} cy={5.5} r={5} fill="#8a8a8a" />
                  <path d="M5.500 2.500v3.200l2.200 1" stroke="#111" fill="none" />
                </svg>
              </Clock>
            </TimeRow>
            <TransportBar>
              <TransportBtn $w={20}><Shape w={12} d="M1 2h2v8H1zM11 2v8L4 6z" /></TransportBtn>
              <TransportBtn $w={19}><Shape w={12} d="M1 2v8l7-4zM9 2h2v8H9z" /></TransportBtn>
              <TransportBtn $w={36}><Shape d="M7 2v8L1 6zM13 2v8L7 6z" /></TransportBtn>
              <TransportBtn $w={38}><Shape d="M1 2v8l6-4zM7 2v8l6-4z" /></TransportBtn>
              <TransportBtn $w={37}>
                <svg width={18} height={12} viewBox="0 0 18 12">
                  <path d="M7 10 C2 9 1 3 7 2 H11 C17 3 16 9 11 9" fill="none" stroke="currentColor" strokeWidth={1.6} />
                  <path d="M7 7 L10 11 L6 12 Z" fill="currentColor" />
                </svg>
              </TransportBtn>
              <TransportBtn $w={37} $on><Shape d="M2 1.500h9v9H2z" /></TransportBtn>
              <TransportBtn $w={37}><Shape d="M3 1.500v9l8-4.500z" /></TransportBtn>
              <TransportBtn $w={37}><Shape d="M7 2a4 4 0 1 0 .01 0z" /></TransportBtn>
            </TransportBar>
          </MainCol>
          <MarkerCol>
            <MarkerTop>
              <TinyCaret $x={106} $y={8} />
              <TinyCaret $x={55} $y={20} />
            </MarkerTop>
            <MarkerBtns>
              <MarkerBtn $w={20}>▲</MarkerBtn>
              <MarkerBtn $w={20}>▼</MarkerBtn>
              <MarkerBtn $w={14}>◀</MarkerBtn>
              <MarkerBtn $w={14}>▶</MarkerBtn>
              <MarkerBtn $w={36}>⟵</MarkerBtn>
            </MarkerBtns>
          </MarkerCol>
          <BlackBox $w={110}>
            <ClickRow><ClickTag>CLICK</ClickTag>OFF<ClickIcon>II✳</ClickIcon></ClickRow>
            <ClickRow><ClickTag>TEMPO</ClickTag>FIXED<ClickRight>4/4</ClickRight></ClickRow>
            <ClickValue>76.000</ClickValue>
            <ClickRow $line style={{ marginTop: 3 }}><ClickTag>SYNC</ClickTag>INT.<ClickRight $dim>离线</ClickRight></ClickRow>
          </BlackBox>
          <BlackBox $w={15} />
          <BlackBox $w={40}>
            <OutMid />
            <OutLevel $x={3} $y={21} $w={12} $color="#6d7a6d" />
            <OutLevel $x={24} $y={21} $w={12} $color="#5f8a70" />
            <OutLevel $x={6} $y={54} $w={12} $color="#38c8d8" />
          </BlackBox>
          <Fader />
          <PanelArrow />
        </Transport>

        <Menu>
          <MenuItem $bold><MenuCheck>✓</MenuCheck>钢琴</MenuItem>
          <MenuItem $active>高音弦乐</MenuItem>
          <MenuItem>低音弦乐</MenuItem>
        </Menu>
        <Annotation width={200} height={96} viewBox="0 0 200 96">
          <ellipse cx={113} cy={46} rx={85} ry={42} fill="none" stroke="#e4211c" strokeWidth={3} transform="rotate(4 113 46)" />
        </Annotation>
        <Pointer width={12} height={18} viewBox="0 0 12 18">
          <path d="M1 1 L1 14 L4 11 L6.500 16.500 L8.500 15.500 L6 10.500 L10 10.500 Z" fill="#f4f4f4" stroke="#333" strokeWidth={1} />
        </Pointer>
      </Blur>
    </Screen>
  );
}

export default App;
